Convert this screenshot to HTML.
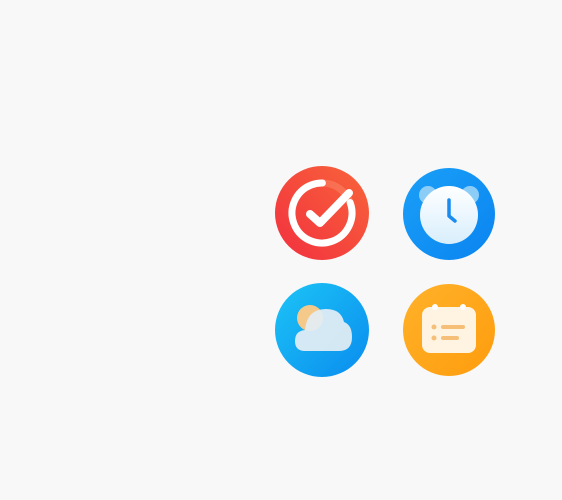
<!DOCTYPE html>
<html><head><style>html,body{margin:0;padding:0;background:#f8f8f8;width:562px;height:500px;overflow:hidden}</style></head>
<body>
<svg width="562" height="500" viewBox="0 0 562 500" xmlns="http://www.w3.org/2000/svg" style="position:absolute;left:0;top:0">
<defs>
<linearGradient id="r" x1="0" y1="1" x2="1" y2="0"><stop offset="0" stop-color="#f2303f"/><stop offset="1" stop-color="#f8643a"/></linearGradient>
<linearGradient id="b" x1="0" y1="0" x2="1" y2="1"><stop offset="0" stop-color="#1aa0f8"/><stop offset="1" stop-color="#0a84f0"/></linearGradient>
<linearGradient id="c" x1="0" y1="0" x2="1" y2="1"><stop offset="0" stop-color="#1cc4f6"/><stop offset="1" stop-color="#0a8cef"/></linearGradient>
<linearGradient id="o" x1="0" y1="0" x2="1" y2="1"><stop offset="0" stop-color="#ffb22a"/><stop offset="1" stop-color="#ff9c0d"/></linearGradient>
<linearGradient id="cw" x1="0" y1="0" x2="0" y2="1"><stop offset="0" stop-color="#ffffff"/><stop offset="1" stop-color="#d8eefc"/></linearGradient>
</defs>
<!-- red check -->
<circle cx="322" cy="213" r="47" fill="url(#r)"/>
<circle cx="322" cy="213" r="30" fill="none" stroke="#fb8a6a" stroke-width="7" opacity="0.5"/>
<circle cx="322" cy="213" r="30" fill="none" stroke="#fff" stroke-width="7" stroke-dasharray="152 36" transform="rotate(-20 322 213)" stroke-linecap="round"/>
<path d="M310 214 L320 223 L349 193" fill="none" stroke="#fff" stroke-width="8" stroke-linecap="round" stroke-linejoin="round"/>
<!-- clock -->
<circle cx="449" cy="214" r="46" fill="url(#b)"/>
<circle cx="428" cy="195" r="9" fill="#8ccdf8"/>
<circle cx="470" cy="195" r="9" fill="#8ccdf8"/>
<circle cx="449" cy="215" r="29" fill="url(#cw)"/>
<path d="M449 200 V216 L455 221" fill="none" stroke="#1a8cf0" stroke-width="3.5" stroke-linecap="round" stroke-linejoin="round"/>
<!-- cloud -->
<circle cx="322" cy="330" r="47" fill="url(#c)"/>
<circle cx="310" cy="318" r="13" fill="#f5c98a"/>
<path d="M305 351 Q295 351 295 341 Q295 331 305 330 Q307 309 326 309 Q341 309 344 322 Q352 325 352 337 Q352 351 339 351 Z" fill="#e3eef4" opacity="0.93"/>
<!-- calendar -->
<circle cx="449" cy="330" r="46" fill="url(#o)"/>
<rect x="422" y="307" width="54" height="46" rx="8" fill="#fff3e2"/>
<circle cx="435" cy="307" r="3" fill="#fff"/><circle cx="463" cy="307" r="3" fill="#fff"/>
<circle cx="434" cy="327" r="2.5" fill="#f6bf78"/><circle cx="434" cy="338" r="2.5" fill="#f6bf78"/>
<rect x="441" y="325" width="24" height="4" rx="2" fill="#f6bf78"/>
<rect x="441" y="336" width="18" height="4" rx="2" fill="#f6bf78"/>
</svg>
</body></html>
